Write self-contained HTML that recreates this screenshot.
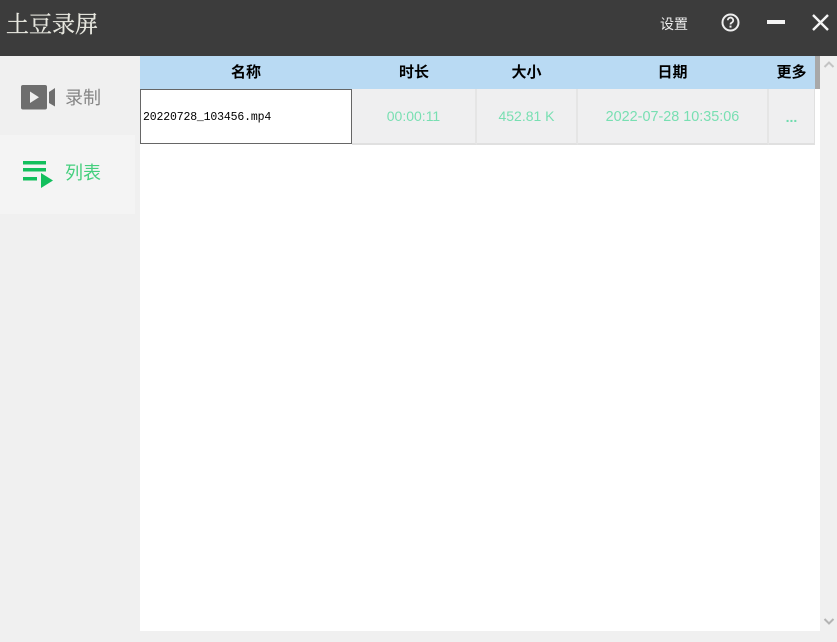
<!DOCTYPE html>
<html><head><meta charset="utf-8">
<style>
html,body{margin:0;padding:0;width:837px;height:642px;overflow:hidden;background:#f0f0f0;font-family:"Liberation Sans","Noto Sans CJK SC",sans-serif}
div{position:absolute;box-sizing:border-box;white-space:nowrap}
.h{top:56px;height:33px;line-height:34px;text-align:center;font-size:15px;font-weight:700;color:#000;background:#b9daf3}
.c{top:89px;height:56px;line-height:55px;text-align:center;font-size:14px;color:#78dfb2;background:#efeff0;border-right:2px solid #e5e5e5;border-bottom:2px solid #e0e0e0}
</style></head><body>
<div style="left:0;top:0;width:837px;height:56px;background:#3c3c3c"></div>
<div style="left:6px;top:7px;font:23px/32px 'Noto Serif CJK SC',serif;color:#e8e8e0;-webkit-text-stroke:.3px #e8e8e0">土豆录屏</div>
<div style="left:660px;top:14px;font-size:14px;line-height:20px;color:#eee">设置</div>
<svg style="position:absolute;left:720px;top:12px" width="21" height="21" viewBox="0 0 21 21"><circle cx="10.500" cy="10.500" r="8" fill="none" stroke="#eee" stroke-width="2"/><path d="M7.800 8.300a2.700 2.700 0 1 1 3.900 2.400c-.8.400-1.200.9-1.200 1.800" fill="none" stroke="#eee" stroke-width="1.800"/><rect x="9.500" y="13.600" width="2" height="2" fill="#eee"/></svg>
<div style="left:767px;top:20px;width:18px;height:4px;background:#f5f5f5"></div>
<svg style="position:absolute;left:811px;top:13px" width="19" height="19" viewBox="0 0 19 19"><path d="M2 2L17 17M17 2L2 17" stroke="#f5f5f5" stroke-width="2.400"/></svg>

<div style="left:0;top:135px;width:135px;height:79px;background:#f4f4f4"></div>
<svg style="position:absolute;left:20px;top:85px" width="36" height="25" viewBox="0 0 36 25"><rect x="1" y="0" width="26" height="24.500" rx="2" fill="#6e6e6e"/><path d="M10 6.500L19 12.300L10 18Z" fill="#f0f0f0"/><path d="M29 7L35 3V21.500L29 18Z" fill="#6e6e6e"/></svg>
<div style="left:65px;top:86px;font-size:18px;line-height:24px;color:#858585">录制</div>
<svg style="position:absolute;left:22px;top:160px" width="33" height="29" viewBox="0 0 33 29"><rect x="1" y="1" width="23" height="3.500" fill="#12bf5c"/><rect x="1" y="8" width="23" height="3.500" fill="#12bf5c"/><rect x="1" y="17" width="14" height="3.500" fill="#12bf5c"/><path d="M19 13L31 20.500L19 28Z" fill="#12bf5c"/></svg>
<div style="left:65px;top:161px;font-size:18px;line-height:24px;color:#45cf7e">列表</div>

<div style="left:140px;top:56px;width:680px;height:575px;background:#fff"></div>
<div class="h" style="left:140px;width:212px">名称</div>
<div class="h" style="left:352px;width:124px">时长</div>
<div class="h" style="left:476px;width:101px">大小</div>
<div class="h" style="left:577px;width:191px">日期</div>
<div class="h" style="left:768px;width:47px">更多</div>
<div style="left:140px;top:89px;width:212px;height:55px;background:#fff;border:1px solid #666;font:11.500px/55px 'Liberation Mono','Noto Sans CJK SC',monospace;color:#000;padding-left:2px;letter-spacing:-.16px">20220728_103456.mp4</div>
<div class="c" style="left:352px;width:125px">00:00:11</div>
<div class="c" style="left:477px;width:101px">452.81 K</div>
<div class="c" style="left:578px;width:191px;font-size:14.400px;line-height:56px">2022-07-28 10:35:06</div>
<div class="c" style="left:769px;width:46px;border-right:1px solid #e0e0e0;line-height:56px;color:#6fdcae;font-weight:700">...</div>
<div style="left:815px;top:56px;width:5px;height:33px;background:#a8a8a8"></div>
<div style="left:820px;top:56px;width:17px;height:586px;background:#f0f0f0"></div>
<svg style="position:absolute;left:823px;top:60px" width="12" height="10" viewBox="0 0 12 10"><path d="M1.500 7L6 2.500L10.500 7" fill="none" stroke="#c4c4c4" stroke-width="2"/></svg>
<svg style="position:absolute;left:823px;top:616px" width="12" height="10" viewBox="0 0 12 10"><path d="M1.500 3L6 7.500L10.500 3" fill="none" stroke="#b4b4b4" stroke-width="2"/></svg>
</body></html>
